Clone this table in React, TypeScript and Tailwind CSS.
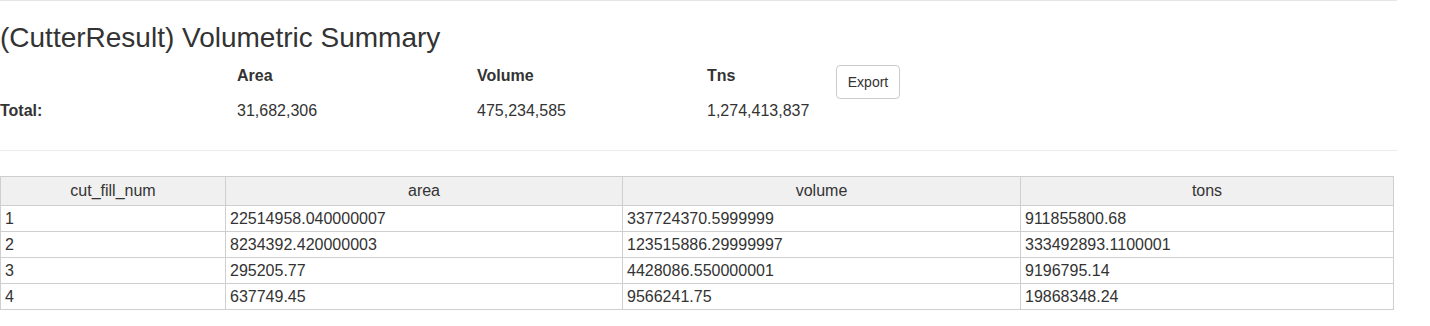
import React from 'react';

const ROWS = [
  { n: '1', area: '22514958.040000007', volume: '337724370.5999999', tons: '911855800.68' },
  { n: '2', area: '8234392.420000003', volume: '123515886.29999997', tons: '333492893.1100001' },
  { n: '3', area: '295205.77', volume: '4428086.550000001', tons: '9196795.14' },
  { n: '4', area: '637749.45', volume: '9566241.75', tons: '19868348.24' },
];

const App: React.FC = () => {
  return (
    <div className="min-h-screen bg-white text-[#333] font-['Liberation_Sans',Arial,sans-serif] text-[16px]">
      <div className="w-[1397px]">
        <hr className="border-0 border-t border-[#e6e6e6]" />

        <h3 className="mt-[21px] text-[28px] leading-[31px] font-normal">(CutterResult) Volumetric Summary</h3>

        {/* totals */}
        <div className="mt-[11px] flex">
          <div className="w-[237px] flex flex-col">
            <div className="h-[35px]" />
            <div className="h-[35px] leading-[23px] font-bold">Total:</div>
          </div>
          <div className="w-[240px] flex flex-col">
            <div className="h-[35px] leading-[23px] font-bold">Area</div>
            <div className="h-[35px] leading-[23px]">31,682,306</div>
          </div>
          <div className="w-[230px] flex flex-col">
            <div className="h-[35px] leading-[23px] font-bold">Volume</div>
            <div className="h-[35px] leading-[23px]">475,234,585</div>
          </div>
          <div className="w-[129px] flex flex-col">
            <div className="h-[35px] leading-[23px] font-bold">Tns</div>
            <div className="h-[35px] leading-[23px]">1,274,413,837</div>
          </div>
          <div className="pt-[1px]">
            <button className="w-[64px] h-[34px] border border-[#ccc] rounded-[4px] bg-white text-[14px] text-[#333]">
              Export
            </button>
          </div>
        </div>

        <hr className="mt-[16px] border-0 border-t border-[#ececec]" />

        <table className="mt-[25px] w-[1393px] table-fixed border-collapse text-[16px]">
          <colgroup>
            <col className="w-[225px]" />
            <col className="w-[397px]" />
            <col className="w-[398px]" />
            <col className="w-[373px]" />
          </colgroup>
          <thead>
            <tr className="bg-[#f0f0f0]">
              {['cut_fill_num', 'area', 'volume', 'tons'].map(h => (
                <th key={h} className="h-[29px] p-0 border border-[#cfcfcf] font-normal text-center leading-[20px]">
                  {h}
                </th>
              ))}
            </tr>
          </thead>
          <tbody>
            {ROWS.map(r => (
              <tr key={r.n}>
                <td className="h-[26px] py-0 pl-[4px] border border-[#cfcfcf] leading-[20px]">{r.n}</td>
                <td className="h-[26px] py-0 pl-[4px] border border-[#cfcfcf] leading-[20px]">{r.area}</td>
                <td className="h-[26px] py-0 pl-[4px] border border-[#cfcfcf] leading-[20px]">{r.volume}</td>
                <td className="h-[26px] py-0 pl-[4px] border border-[#cfcfcf] leading-[20px]">{r.tons}</td>
              </tr>
            ))}
          </tbody>
        </table>
      </div>
    </div>
  );
};

export default App;
